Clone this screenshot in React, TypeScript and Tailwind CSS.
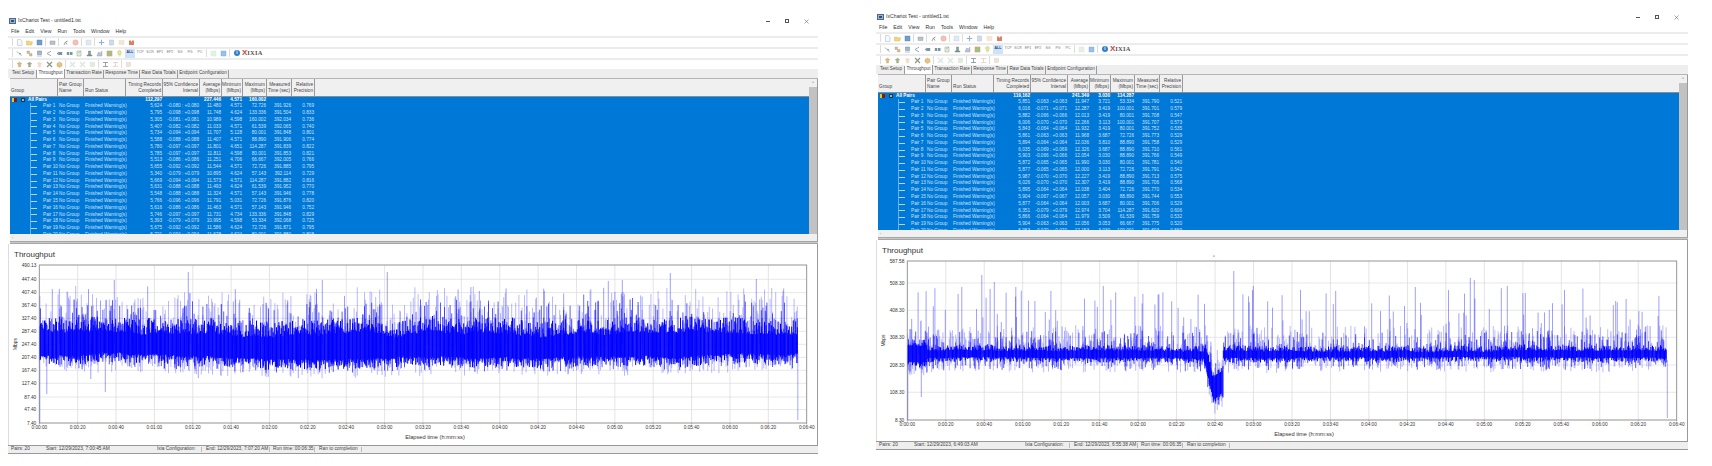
import type { ReactNode } from 'react';

type Row = [string, string, string, string, string, string, string, string];

type Spike = [number, number];

type PlotConfig = {
  seed: number;
  width: number;
  height: number;
  dataEnd: number;
  endY: number;
  yLabels: [string, number][];
  spikes: Spike[];
  drops: Spike[];
  center: (x: number) => number;
  half: (x: number) => number;
  wander: number;
  jagUp: number;
  jagDown: number;
  midUp: number;
  midDown: number;
  lightUp: number;
  lightDown: number;
  spikeChance: number;
  spikeMin: number;
  spikeRange: number;
  dot?: number;
};

const leftRows: Row[] = [
  ['5,624', '-0.080 : +0.080', '11.480', '4.571', '72.726', '391.926', '0.769', '1'],
  ['5,795', '-0.098 : +0.098', '11.748', '4.624', '133.336', '391.504', '0.833', '2'],
  ['5,305', '-0.081 : +0.081', '10.989', '4.598', '160.002', '392.034', '0.736', '3'],
  ['5,407', '-0.082 : +0.082', '11.033', '4.571', '61.539', '392.065', '0.740', '4'],
  ['5,734', '-0.094 : +0.094', '11.707', '5.128', '80.001', '391.848', '0.801', '5'],
  ['5,588', '-0.088 : +0.088', '11.407', '4.571', '88.890', '391.906', '0.774', '6'],
  ['5,780', '-0.097 : +0.097', '11.801', '4.651', '114.287', '391.839', '0.822', '7'],
  ['5,785', '-0.097 : +0.097', '11.811', '4.598', '80.001', '391.853', '0.821', '8'],
  ['5,513', '-0.086 : +0.086', '11.251', '4.706', '66.667', '392.005', '0.766', '9'],
  ['5,655', '-0.092 : +0.092', '11.544', '4.571', '72.726', '391.885', '0.795', '10'],
  ['5,340', '-0.079 : +0.079', '10.895', '4.624', '57.143', '392.114', '0.729', '11'],
  ['5,669', '-0.094 : +0.094', '11.573', '4.571', '114.287', '391.882', '0.816', '12'],
  ['5,631', '-0.088 : +0.088', '11.493', '4.624', '61.539', '391.952', '0.770', '13'],
  ['5,548', '-0.088 : +0.088', '11.324', '4.571', '57.143', '391.946', '0.778', '14'],
  ['5,766', '-0.096 : +0.096', '11.791', '5.031', '72.726', '391.876', '0.820', '15'],
  ['5,616', '-0.086 : +0.086', '11.463', '4.571', '57.143', '391.946', '0.752', '16'],
  ['5,746', '-0.097 : +0.097', '11.731', '4.734', '133.336', '391.848', '0.829', '17'],
  ['5,393', '-0.079 : +0.079', '10.995', '4.598', '53.334', '392.068', '0.725', '18'],
  ['5,675', '-0.092 : +0.092', '11.586', '4.624', '72.726', '391.871', '0.795', '19'],
  ['5,721', '-0.094 : +0.094', '11.678', '4.624', '80.001', '391.880', '0.808', '20'],
];

const rightRows: Row[] = [
  ['5,851', '-0.063 : +0.063', '11.947', '3.721', '53.334', '391.790', '0.521', '1'],
  ['6,016', '-0.071 : +0.071', '12.287', '3.419', '100.001', '391.701', '0.579', '2'],
  ['5,882', '-0.066 : +0.066', '12.013', '3.419', '80.001', '391.708', '0.547', '3'],
  ['6,006', '-0.070 : +0.070', '12.266', '3.113', '100.001', '391.707', '0.573', '4'],
  ['5,843', '-0.064 : +0.064', '11.932', '3.419', '80.001', '391.752', '0.535', '5'],
  ['5,861', '-0.063 : +0.063', '11.968', '3.687', '72.726', '391.773', '0.529', '6'],
  ['5,894', '-0.064 : +0.064', '12.036', '3.810', '88.890', '391.758', '0.529', '7'],
  ['6,035', '-0.069 : +0.069', '12.326', '3.687', '88.890', '391.710', '0.561', '8'],
  ['5,903', '-0.066 : +0.066', '12.054', '3.030', '88.890', '391.766', '0.549', '9'],
  ['5,872', '-0.065 : +0.065', '11.990', '3.030', '80.001', '391.781', '0.540', '10'],
  ['5,877', '-0.065 : +0.065', '12.000', '3.113', '72.726', '391.791', '0.542', '11'],
  ['5,987', '-0.070 : +0.070', '12.227', '3.419', '88.890', '391.713', '0.575', '12'],
  ['6,026', '-0.070 : +0.070', '12.307', '3.419', '88.890', '391.706', '0.568', '13'],
  ['5,895', '-0.064 : +0.064', '12.038', '3.404', '72.726', '391.770', '0.534', '14'],
  ['5,904', '-0.067 : +0.067', '12.057', '3.030', '88.890', '391.744', '0.553', '15'],
  ['5,877', '-0.064 : +0.064', '12.003', '3.687', '80.001', '391.706', '0.529', '16'],
  ['6,351', '-0.079 : +0.079', '12.974', '3.704', '114.287', '391.620', '0.606', '17'],
  ['5,866', '-0.064 : +0.064', '11.979', '3.509', '61.539', '391.759', '0.532', '18'],
  ['5,904', '-0.063 : +0.063', '12.056', '3.053', '66.667', '391.775', '0.520', '19'],
  ['5,953', '-0.070 : +0.070', '12.153', '3.030', '100.001', '391.693', '0.569', '20'],
];

const xLabels = Array.from({ length: 21 }, (_, i) => {
  const total = i * 20;
  const min = Math.floor(total / 60);
  const sec = total % 60;
  return `0:0${min}:${sec < 10 ? '0' : ''}${sec}`;
});

const gridCols = 'grid grid-cols-[48px_26px_42px_37px_37px_22px_21px_24px_25px_23px]';

function rng(seed: number) {
  let a = seed;
  return () => {
    a = (a + 0x6d2b79f5) | 0;
    let t = Math.imul(a ^ (a >>> 15), 1 | a);
    t = (t + Math.imul(t ^ (t >>> 7), 61 | t)) ^ t;
    return ((t ^ (t >>> 14)) >>> 0) / 4294967296;
  };
}

// builds the overlaid stroke layers of a throughput trace
function buildTrace(c: PlotConfig) {
  const r = rng(c.seed);
  let core = '';
  let mid = '';
  let light = '';
  let spikes = '';
  let up = 0;
  let down = 0;
  for (let x = 0.4; x < c.dataEnd; x += 0.8) {
    up = up * 0.985 + (r() - 0.5) * 1.3;
    down = down * 0.985 + (r() - 0.5) * 0.9;
    const cy = c.center(x);
    const h = c.half(x);
    const top = h + up * c.wander;
    const bottom = h + down * c.wander;
    const p = x.toFixed(1);
    core += `M${p} ${(cy - top - Math.pow(r(), 2) * c.jagUp).toFixed(1)}V${(cy + bottom + Math.pow(r(), 2) * c.jagDown).toFixed(1)}`;
    if (r() < 0.55) {
      mid += `M${p} ${(cy - top - Math.pow(r(), 2) * c.midUp).toFixed(1)}V${(cy + bottom + Math.pow(r(), 2) * c.midDown).toFixed(1)}`;
    }
    if (r() < 0.65) {
      light += `M${p} ${(cy - top - Math.pow(r(), 1.8) * c.lightUp).toFixed(1)}V${(cy + bottom + Math.pow(r(), 1.7) * c.lightDown).toFixed(1)}`;
    }
    if (r() < c.spikeChance) {
      spikes += `M${p} ${cy.toFixed(1)}V${(cy - c.spikeMin - r() * c.spikeRange).toFixed(1)}`;
    }
  }
  for (const [x, y] of c.spikes) spikes += `M${x} ${c.center(x)}V${y}`;
  for (const [x, y] of c.drops) spikes += `M${x} ${c.center(x)}V${y}`;
  return { core, mid, light, spikes };
}

const leftPlot: PlotConfig = {
  seed: 71,
  width: 767.4,
  height: 158,
  dataEnd: 758,
  endY: 155,
  yLabels: [
    ['490.13', 0],
    ['447.40', 14.3],
    ['407.40', 27.6],
    ['367.40', 40.6],
    ['327.40', 53.3],
    ['287.40', 66.3],
    ['247.40', 79.3],
    ['207.40', 92.3],
    ['167.40', 105.3],
    ['127.40', 118.3],
    ['87.40', 132],
    ['47.40', 144.6],
    ['7.40', 158],
  ],
  spikes: [
    [149, 7],
    [75, 15],
    [348, 7],
    [283, 15],
    [631, 8],
    [717, 14],
    [569, 16],
    [583, 15],
    [20, 24],
    [196, 24],
    [0.5, 31],
    [13, 24],
    [440, 26],
    [505, 26],
  ],
  drops: [
    [7.5, 129],
    [66, 127],
    [51.5, 114],
    [159, 113],
    [0.5, 158],
    [259, 113],
  ],
  center: () => 79,
  half: () => 12,
  wander: 1.1,
  jagUp: 16,
  jagDown: 10,
  midUp: 34,
  midDown: 14,
  lightUp: 46,
  lightDown: 19,
  spikeChance: 0.03,
  spikeMin: 38,
  spikeRange: 20,
};

const rightPlot: PlotConfig = {
  seed: 19,
  width: 769.4,
  height: 159,
  dataEnd: 759.5,
  endY: 157,
  yLabels: [
    ['587.58', 0],
    ['508.30', 22],
    ['408.30', 49.3],
    ['308.30', 76.3],
    ['208.30', 104],
    ['108.30', 131.3],
    ['8.30', 159],
  ],
  spikes: [
    [74.5, 14],
    [87, 21],
    [54.5, 26],
    [108.5, 26],
    [196, 25],
    [326.5, 10],
    [563, 17],
    [567, 19],
    [600, 25],
    [508, 26],
    [346, 25],
  ],
  drops: [
    [0.5, 159],
    [14, 136],
  ],
  center: (x) => {
    if (x > 298 && x < 316) {
      if (x < 306) return 93 + (x - 298) * 4.3;
      return 127 - (x - 306) * 0.7;
    }
    return 93;
  },
  half: (x) => {
    if (x > 298 && x < 316) return 9 + (x < 306 ? 0 : 2);
    if (x < 20) return 8;
    return 3.5;
  },
  wander: 0.3,
  jagUp: 6,
  jagDown: 5,
  midUp: 20,
  midDown: 13,
  lightUp: 26,
  lightDown: 15,
  spikeChance: 0.15,
  spikeMin: 20,
  spikeRange: 46,
  dot: 306,
};

function Glyph({ kind }: { kind: string }) {
  const shapes: Record<string, ReactNode> = {
    doc: <path d="M1.500.5h3l1.500 1.500v4.500h-4.500z" fill="#f4f7fb" stroke="#9db4d0" strokeWidth=".6" />,
    folder: <path d="M.5 2h2.500l.5.7h3l-.7 3.300h-5.300z" fill="#f0cd5c" stroke="#c49a2c" strokeWidth=".4" />,
    save: <rect x="1" y="1" width="5" height="5" fill="#4d86c6" stroke="#2e5f98" strokeWidth=".4" />,
    print: <rect x="1" y="2" width="5" height="3.500" fill="#a9b3bd" stroke="#6f7a86" strokeWidth=".4" />,
    run: <path d="M2 6l1.500-3 2-1M3.500 3l1.500 2.500" fill="none" stroke="#6b6b6b" strokeWidth=".8" />,
    stop: <circle cx="3.500" cy="3.500" r="2.700" fill="#f3b1a6" stroke="#e88a7a" strokeWidth=".4" />,
    pale: <rect x="1" y="1" width="5" height="5" fill="#d9e4f2" stroke="#b7c8de" strokeWidth=".4" />,
    cross: <path d="M3.500.8v5.400M.8 3.500h5.400" stroke="#6aa3da" strokeWidth="1.100" />,
    sheet: <rect x="1.500" y="1" width="4" height="5" fill="#c4d3e8" stroke="#8fa7c6" strokeWidth=".4" />,
    note: <rect x="1" y="1.500" width="5" height="4" fill="#f3e3c6" stroke="#e2cfa8" strokeWidth=".4" />,
    red: <path d="M1 6V1.500h2v1h1v-1h2v4.500z" fill="#d8603f" />,
    link: <path d="M1 1.500l2 2 2.500 2M3 3.500h2" fill="none" stroke="#5c7f96" strokeWidth=".8" />,
    link2: <path d="M1 1h2.500v2.500h-2.500zM3.500 3.500h2.500v2.500h-2.500z" fill="#e8a64a" stroke="#6f88a8" strokeWidth=".4" />,
    monitor: <path d="M1.500 1h4v3.500h-4zM1 6h5" fill="#8fa8b8" stroke="#4f6a7c" strokeWidth=".5" />,
    branch: <path d="M1 3.500l4-2.300M1 3.500l4 2.300" fill="none" stroke="#5f7f99" strokeWidth=".8" />,
    pair: <path d="M.8 3.500l2-2v4zM3 2h3.200v3h-3.200z" fill="#58788e" />,
    pair2: <path d="M.8 2h2.500v3h-2.500zM4 2h2.500v3h-2.500z" fill="#5d7a8e" />,
    edit: <path d="M1 1h4v5h-4zM2 3l3-2" fill="#dfe8d6" stroke="#7f8f7a" strokeWidth=".5" />,
    pc: <path d="M1 5h5v1h-5zM2.500 1h2v4h-2z" fill="#6e8a6e" stroke="#33566e" strokeWidth=".4" />,
    chart: <path d="M1 6l1.500-4 2 1 1.500-2v5z" fill="#a9b6c8" stroke="#76879c" strokeWidth=".4" />,
    map: <rect x="1" y="1" width="5" height="5" fill="#7fb36a" stroke="#d98a4a" strokeWidth=".6" />,
    bulb: <path d="M3.500.5a1.800 1.800 0 011.200 3.200v1.300h-2.400v-1.300a1.800 1.800 0 011.200-3.200zM2.600 6h1.800" fill="#e4e26c" stroke="#9faf5a" strokeWidth=".4" />,
    ghost: <rect x="1" y="1" width="5" height="5" fill="#dcefe0" stroke="#c4dfca" strokeWidth=".4" />,
    blue: <rect x="1" y="1" width="5" height="5" fill="#7fb2e4" stroke="#4f8fce" strokeWidth=".4" />,
    up: <path d="M3.500 1l2.500 2h-1.500v3h-2v-3h-1.500z" fill="#d8a94e" stroke="#8a7a3a" strokeWidth=".3" />,
    up2: <path d="M3.500 1l2.500 2h-1.500v3h-2v-3h-1.500z" fill="#6fa86a" stroke="#c8584a" strokeWidth=".3" />,
    up3: <path d="M3.500 1l2.500 2h-1.500v3h-2v-3h-1.500z" fill="#f2d3c4" stroke="#e8b8a2" strokeWidth=".3" />,
    tools: <path d="M1 1l5 5M6 1l-5 5" stroke="#6e7f6a" strokeWidth="1.200" />,
    box: <path d="M1 2.500l2.500-1.500 2.500 1.500v2.500l-2.500 1.500-2.500-1.500z" fill="#e5b55a" stroke="#a5854a" strokeWidth=".4" />,
    fade: <path d="M1 1l5 5M6 1l-5 5" stroke="#cfe0d6" strokeWidth="1.100" />,
    fade2: <rect x="1.500" y="1.500" width="4" height="4" fill="#dbe8d2" stroke="#b9d0b0" strokeWidth=".4" />,
    arrows: <path d="M1 1.500h5M1 5.500h5M3.500 1v5" stroke="#6f8496" strokeWidth=".9" />,
    fadeRed: <path d="M1 1.500h5M1 5.500h5M3.500 1v5" stroke="#eec4bc" strokeWidth=".9" />,
    grid: <rect x="1.500" y="1.500" width="4" height="4" fill="#ecdcd0" stroke="#d4c4b6" strokeWidth=".4" />,
  };
  return (
    <span className="flex w-[10px] shrink-0 items-center justify-center opacity-80">
      <svg viewBox="0 0 7 7" className="h-[7px] w-[7px]">
        {shapes[kind]}
      </svg>
    </span>
  );
}

function Sep() {
  return (
    <span className="flex w-[3px] shrink-0 items-center justify-center">
      <span className="h-[8px] w-px bg-[#dcdcdc]" />
    </span>
  );
}

function Toolbar({ children }: { children: ReactNode }) {
  return (
    <div className="flex h-[11px] items-center border-t-2 border-[#ececec] pl-[3px]">{children}</div>
  );
}

function Toolbars() {
  return (
    <>
      <Toolbar>
        <Sep />
        <Glyph kind="doc" />
        <Glyph kind="folder" />
        <Glyph kind="save" />
        <Sep />
        <Glyph kind="print" />
        <Sep />
        <Glyph kind="run" />
        <Glyph kind="stop" />
        <Sep />
        <Glyph kind="pale" />
        <Sep />
        <Glyph kind="cross" />
        <Glyph kind="sheet" />
        <Glyph kind="note" />
        <Glyph kind="red" />
      </Toolbar>
      <Toolbar>
        <Sep />
        <Glyph kind="link" />
        <Glyph kind="link2" />
        <Glyph kind="monitor" />
        <Glyph kind="branch" />
        <Glyph kind="pair" />
        <Glyph kind="pair2" />
        <Glyph kind="edit" />
        <Glyph kind="pc" />
        <Glyph kind="chart" />
        <Glyph kind="map" />
        <Glyph kind="bulb" />
        <span className="ml-[1px] flex h-[9px] w-[10px] items-center justify-center bg-[#cfe3f6] text-[3.500px] font-bold text-[#1f3f7a]">
          ALL
        </span>
        {['TCP', 'SCR', 'EP1', 'EP2', 'SG', 'PG', 'PC'].map((p) => (
          <span key={p} className="w-[10px] text-center text-[3.500px] text-[#777]">
            {p}
          </span>
        ))}
        <Sep />
        <Glyph kind="ghost" />
        <Glyph kind="blue" />
        <Sep />
        <span className="ml-[3px] flex h-[6px] w-[6px] items-center justify-center rounded-full bg-[#2f7fc8] text-[4.500px] font-bold text-white">
          i
        </span>
        <span className="ml-[2px] text-[8px] leading-none font-bold text-[#d43c3c]">X</span>
        <span className="[font-family:'Liberation_Serif',serif] text-[6.500px] font-bold tracking-[0.2px] text-[#555]">
          IXIA
        </span>
      </Toolbar>
      <Toolbar>
        <Sep />
        <Glyph kind="up" />
        <Glyph kind="up2" />
        <Glyph kind="up3" />
        <Glyph kind="tools" />
        <Glyph kind="box" />
        <Sep />
        <Glyph kind="fade" />
        <Glyph kind="fade" />
        <Glyph kind="fade2" />
        <Sep />
        <Glyph kind="arrows" />
        <Glyph kind="fadeRed" />
        <Sep />
        <Glyph kind="grid" />
      </Toolbar>
    </>
  );
}

function Tabs() {
  const tabs = [
    ['Test Setup', 'w-[27px]'],
    ['Throughput', 'w-[28px]'],
    ['Transaction Rate', 'w-[39px]'],
    ['Response Time', 'w-[36px]'],
    ['Raw Data Totals', 'w-[38px]'],
    ['Endpoint Configuration', 'w-[51px]'],
  ];
  return (
    <div className="flex h-[9px] items-end bg-[#eeeeee] pl-[2px] text-[4.700px] text-[#444]">
      {tabs.map(([label, w]) => (
        <span
          key={label}
          className={`${w} ${
            label === 'Throughput' ? 'h-[9px] bg-white' : 'h-[8px]'
          } flex items-center justify-center border-r border-[#9a9a9a] whitespace-nowrap`}
        >
          {label}
        </span>
      ))}
    </div>
  );
}

function TableHead() {
  const left = ['Group', 'Pair Group Name', 'Run Status'];
  const right = [
    ['Timing Records', 'Completed'],
    ['95% Confidence', 'Interval'],
    ['Average', '(Mbps)'],
    ['Minimum', '(Mbps)'],
    ['Maximum', '(Mbps)'],
    ['Measured', 'Time (sec)'],
    ['Relative', 'Precision'],
  ];
  return (
    <div className={`${gridCols} h-[18px] border-b border-[#8c8c8c] bg-[#f0f0f0] text-[4.700px] leading-[6px] text-[#444]`}>
      {left.map((h) => (
        <div key={h} className="flex items-end border-r border-[#9a9a9a] pb-[2px] pl-[1px] whitespace-nowrap">
          {h === 'Pair Group Name' ? (
            <span>
              Pair Group
              <br />
              Name
            </span>
          ) : (
            h
          )}
        </div>
      ))}
      {right.map(([a, b]) => (
        <div key={a} className="flex flex-col items-end justify-end border-r border-[#9a9a9a] pr-[1px] pb-[2px] whitespace-nowrap">
          <span>{a}</span>
          <span>{b}</span>
        </div>
      ))}
    </div>
  );
}

function TableBody({ rows, totals }: { rows: Row[]; totals: string[] }) {
  return (
    <div className="h-[137.500px] overflow-hidden bg-[#0078d7] text-[4.700px] leading-[6.770px] text-[#cfe2f6]">
      <div className={`${gridCols} h-[6.770px] font-bold text-white`}>
        <div className="flex items-center whitespace-nowrap">
          <span className="ml-[2px] flex h-[4px] w-[5px] bg-[#7a1f10]">
            <span className="h-full w-[2px] bg-[#f0c020]" />
          </span>
          <span className="ml-[4px] h-[4px] w-[4px] border border-[#1c3a55] bg-[#9fb0bf]" />
          <span className="ml-[3px]">All Pairs</span>
        </div>
        <span />
        <span />
        <span className="pr-[1px] text-right">{totals[0]}</span>
        <span />
        <span className="pr-[1px] text-right">{totals[1]}</span>
        <span className="pr-[1px] text-right">{totals[2]}</span>
        <span className="pr-[1px] text-right">{totals[3]}</span>
      </div>
      {rows.map((row) => (
        <div key={row[7]} className={`${gridCols} h-[6.770px]`}>
          <div className="flex items-center whitespace-nowrap">
            <span className="ml-[20px] flex h-full w-[7px] items-center border-l border-[#6fb0e6]">
              <span className="h-px w-full bg-[#b5d5f2]" />
            </span>
            <span className="ml-[6px]">Pair {row[7]}</span>
          </div>
          <span className="pl-[1px]">No Group</span>
          <span className="pl-[1px] whitespace-nowrap">Finished Warning(s)</span>
          {row.slice(0, 7).map((cell, i) => (
            <span key={i} className="pr-[1px] text-right whitespace-nowrap">
              {cell}
            </span>
          ))}
        </div>
      ))}
    </div>
  );
}

function Plot({ c }: { c: PlotConfig }) {
  const t = buildTrace(c);
  const step = c.width / 20;
  const left = 30.3;
  const tickY = c.height;
  return (
    <svg
      className="block overflow-visible"
      width={left + c.width + 10}
      height={tickY + 22}
      fontFamily="'Liberation Sans', sans-serif"
    >
      <g transform={`translate(${left} 0)`}>
        {c.yLabels.map(([label, y]) => (
          <g key={label}>
            <line x1={0} x2={c.width} y1={y} y2={y} stroke="#dddddd" strokeWidth={0.7} />
            <text x={-3} y={y + 1.7} fontSize={4.8} textAnchor="end" fill="#333">
              {label}
            </text>
          </g>
        ))}
        {xLabels.map((label, i) => (
          <g key={label}>
            <line x1={i * step} x2={i * step} y1={0} y2={tickY} stroke="#d9d9d9" strokeWidth={0.7} />
            <line x1={i * step} x2={i * step} y1={tickY} y2={tickY + 1.5} stroke="#777" strokeWidth={0.5} />
            <text x={i * step} y={tickY + 6} fontSize={4.7} textAnchor="middle" fill="#333">
              {label}
            </text>
          </g>
        ))}
        <path d={t.light} stroke="#0000ff" strokeOpacity={0.3} strokeWidth={0.9} fill="none" />
        <path d={t.spikes} stroke="#0000ff" strokeOpacity={0.42} strokeWidth={0.9} fill="none" />
        <path d={t.mid} stroke="#0000ff" strokeOpacity={0.8} strokeWidth={0.8} fill="none" />
        <path d={t.core} stroke="#0000ff" strokeWidth={1} fill="none" />
        <line
          x1={c.dataEnd + 0.5}
          x2={c.dataEnd + 0.5}
          y1={c.center(c.dataEnd) + 6}
          y2={c.endY}
          stroke="#0000ff"
          strokeOpacity={0.5}
          strokeWidth={0.7}
        />
        <rect x={0} y={0} width={c.width} height={c.height} fill="none" stroke="#8a8a8a" strokeWidth={0.8} />
        {c.dot !== undefined && <rect x={c.dot} y={-5.5} width={1.2} height={1.2} fill="#e0584f" />}
        <text x={c.width / 2 + 12} y={tickY + 15.5} fontSize={5.7} textAnchor="middle" fill="#333">
          Elapsed time (h:mm:ss)
        </text>
        <text
          transform={`translate(-22.5 ${c.height / 2}) rotate(-90)`}
          fontSize={5}
          textAnchor="middle"
          fill="#333"
        >
          Mbps
        </text>
      </g>
    </svg>
  );
}

type WindowProps = {
  className: string;
  chartHeight: string;
  rows: Row[];
  totals: string[];
  plot: PlotConfig;
  start: string;
  end: string;
};

function ChariotWindow({ className, chartHeight, rows, totals, plot, start, end }: WindowProps) {
  return (
    <div className={`shrink-0 ${className}`}>
      <div className="flex h-[12px] items-center text-[5.200px] text-[#333]">
        <span className="ml-[1px] flex h-[6px] w-[7px] items-center justify-center border border-[#4a6a8f] bg-[#9fb5cc]">
          <span className="h-[2px] w-[3px] bg-[#2f4f73]" />
        </span>
        <span className="ml-[2px]">IxChariot Test - untitled1.tst</span>
        <div className="mr-[9px] ml-auto flex items-center gap-[15px]">
          <span className="h-px w-[4px] bg-[#555]" />
          <span className="h-[4px] w-[4px] border border-[#555]" />
          <svg viewBox="0 0 5 5" className="h-[5px] w-[5px]">
            <path d="M.5.5l4 4M4.500.5l-4 4" stroke="#666" strokeWidth=".6" />
          </svg>
        </div>
      </div>
      <div className="flex h-[8.500px] items-center gap-[6px] pl-[3px] text-[5.200px] text-[#333]">
        {['File', 'Edit', 'View', 'Run', 'Tools', 'Window', 'Help'].map((m) => (
          <span key={m}>{m}</span>
        ))}
      </div>
      <Toolbars />
      <Tabs />
      <div className="ml-[2px] flex border-t border-[#b5b5b5] bg-[#f0f0f0]">
        <div className="min-w-0 flex-1">
          <TableHead />
          <TableBody rows={rows} totals={totals} />
        </div>
        <div className="w-[8px] shrink-0 bg-[#c2c2c2]">
          <div className="flex h-[8px] items-center justify-center bg-[#f0f0f0] text-[4px] text-[#666]">^</div>
        </div>
        <div className="w-px shrink-0 bg-[#9a9a9a]" />
      </div>
      <div className="ml-[2px] flex h-[7px] items-center border-r border-[#9a9a9a] bg-[#f0f0f0] pl-[2px] text-[4px] text-[#999]">
        ‹
      </div>
      <div className="ml-[2px] h-[3px] border-y border-[#a5a5a5] bg-[#c8c8c8]" />
      <div className={`${chartHeight} border-x border-r-[#9a9a9a] border-l-[#dddddd] bg-white`}>
        <div className="flex h-[21px] items-center pl-[5px] text-[8px] text-[#333]">Throughput</div>
        <Plot c={plot} />
      </div>
      <div className="flex h-[9px] items-center border-y border-[#999] bg-[#eeeeee] text-[4.800px] text-[#444]">
        <span className="w-[35px] pl-[3px]">Pairs: 20</span>
        <span className="w-[112px] pl-[3px] whitespace-nowrap">Start: {start}</span>
        <span className="w-[46px] pl-[2px] whitespace-nowrap">Ixia Configuration:</span>
        <span className="w-[68px] border-l border-[#bbb] pl-[4px] whitespace-nowrap">End: {end}</span>
        <span className="w-[45px] border-l border-[#bbb] pl-[3px] whitespace-nowrap">Run time: 00:06:35</span>
        <span className="w-[48px] border-x border-[#bbb] pl-[4px] whitespace-nowrap">Ran to completion</span>
      </div>
    </div>
  );
}

export default function App() {
  return (
    <div className="flex h-[466px] w-[1712px] items-start overflow-hidden bg-white [font-family:'Liberation_Sans',Arial,sans-serif] leading-none">
      <ChariotWindow
        className="mt-[15px] ml-2 w-[810px]"
        chartHeight="h-[201px]"
        rows={leftRows}
        totals={['112,297', '227.446', '4.571', '160.002']}
        plot={leftPlot}
        start="12/29/2023, 7:00:45 AM"
        end="12/29/2023, 7:07:20 AM"
      />
      <ChariotWindow
        className="mt-[11px] ml-[58px] w-[812px]"
        chartHeight="h-[201px]"
        rows={rightRows}
        totals={['119,162', '241.349', '3.030', '114.287']}
        plot={rightPlot}
        start="12/29/2023, 6:49:03 AM"
        end="12/29/2023, 6:55:38 AM"
      />
    </div>
  );
}
